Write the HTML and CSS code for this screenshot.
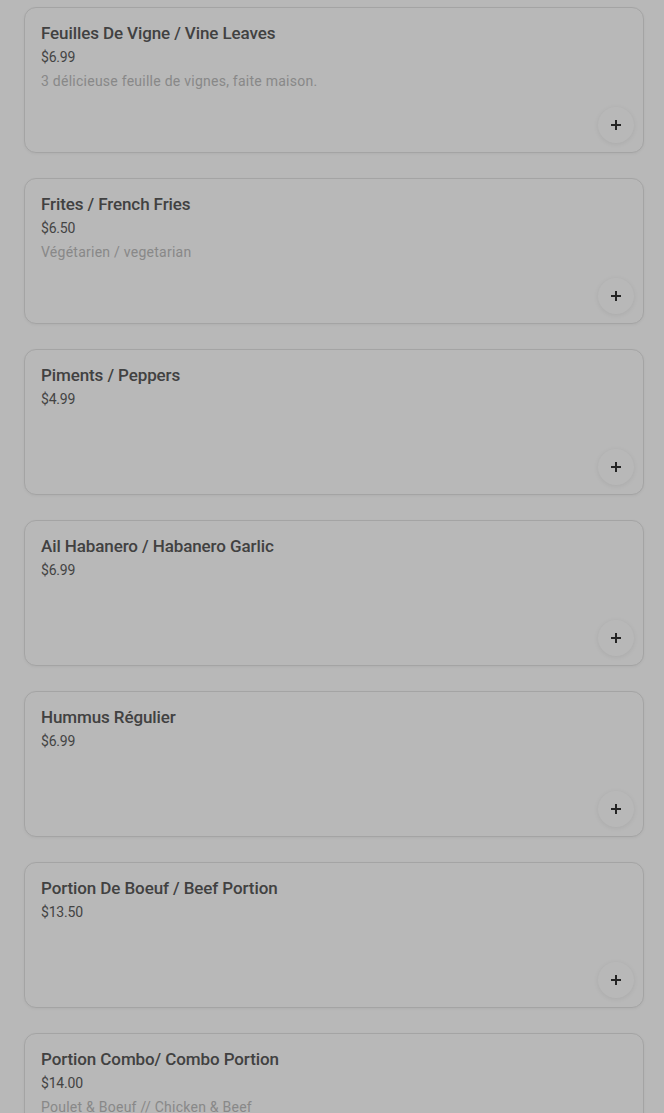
FILE: index.html
```html
<!DOCTYPE html>
<html lang="fr">

<head>
    <meta charset="UTF-8">
    <meta name="viewport" content="width=device-width, initial-scale=1.0">
    <title>Menu</title>
    <link rel="stylesheet" href="styles.css">
</head>

<body>
    <div class="menu-list">
        <div class="item-card">
            <div class="item-info">
                <div class="item-title">Feuilles De Vigne / Vine Leaves</div>
                <div class="item-price">$6.99</div>
                <div class="item-desc">3 délicieuse feuille de vignes, faite maison.</div>
            </div>
            <button class="add-btn" aria-label="Ajouter"><svg viewBox="0 0 12 12" width="12" height="12"><path d="M6 1v10M1 6h10" stroke="#333" stroke-width="2" fill="none"/></svg></button>
        </div>

        <div class="item-card">
            <div class="item-info">
                <div class="item-title">Frites / French Fries</div>
                <div class="item-price">$6.50</div>
                <div class="item-desc">Végétarien  / vegetarian</div>
            </div>
            <button class="add-btn" aria-label="Ajouter"><svg viewBox="0 0 12 12" width="12" height="12"><path d="M6 1v10M1 6h10" stroke="#333" stroke-width="2" fill="none"/></svg></button>
        </div>

        <div class="item-card">
            <div class="item-info">
                <div class="item-title">Piments / Peppers</div>
                <div class="item-price">$4.99</div>
            </div>
            <button class="add-btn" aria-label="Ajouter"><svg viewBox="0 0 12 12" width="12" height="12"><path d="M6 1v10M1 6h10" stroke="#333" stroke-width="2" fill="none"/></svg></button>
        </div>

        <div class="item-card">
            <div class="item-info">
                <div class="item-title">Ail Habanero / Habanero Garlic</div>
                <div class="item-price">$6.99</div>
            </div>
            <button class="add-btn" aria-label="Ajouter"><svg viewBox="0 0 12 12" width="12" height="12"><path d="M6 1v10M1 6h10" stroke="#333" stroke-width="2" fill="none"/></svg></button>
        </div>

        <div class="item-card">
            <div class="item-info">
                <div class="item-title">Hummus Régulier</div>
                <div class="item-price">$6.99</div>
            </div>
            <button class="add-btn" aria-label="Ajouter"><svg viewBox="0 0 12 12" width="12" height="12"><path d="M6 1v10M1 6h10" stroke="#333" stroke-width="2" fill="none"/></svg></button>
        </div>

        <div class="item-card">
            <div class="item-info">
                <div class="item-title">Portion De Boeuf / Beef Portion</div>
                <div class="item-price">$13.50</div>
            </div>
            <button class="add-btn" aria-label="Ajouter"><svg viewBox="0 0 12 12" width="12" height="12"><path d="M6 1v10M1 6h10" stroke="#333" stroke-width="2" fill="none"/></svg></button>
        </div>

        <div class="item-card">
            <div class="item-info">
                <div class="item-title">Portion Combo/ Combo Portion</div>
                <div class="item-price">$14.00</div>
                <div class="item-desc">Poulet &amp; Boeuf // Chicken &amp; Beef</div>
            </div>
            <button class="add-btn" aria-label="Ajouter"><svg viewBox="0 0 12 12" width="12" height="12"><path d="M6 1v10M1 6h10" stroke="#333" stroke-width="2" fill="none"/></svg></button>
        </div>
    </div>

    <!-- fond assombri derrière une fenêtre modale -->
    <div class="backdrop"></div>
</body>

</html>
```

FILE: styles.css
```css
* {
    box-sizing: border-box;
    margin: 0;
    padding: 0;
}

body {
    font-family: Roboto, 'Liberation Sans', Arial, sans-serif;
    background: #fff;
    color: #000;
    overflow: hidden;
}

.menu-list {
    display: flex;
    flex-direction: column;
    gap: 25px;
    padding: 7px 20px 0 24px;
}

.item-card {
    display: flex;
    flex-direction: column;
    justify-content: space-between;
    height: 146px;
    padding: 13px 9px 9px 16px;
    background: #fff;
    border: 1px solid #e4e4e4;
    border-radius: 12px;
    box-shadow: 0 1px 3px rgba(0, 0, 0, 0.05);
}

.item-title {
    font-size: 17px;
    font-weight: 500;
    line-height: 24px;
    color: #5a5a5a;
    letter-spacing: -0.1px;
}

.item-price {
    font-size: 14px;
    line-height: 24px;
    color: #5e5e5e;
    letter-spacing: -0.2px;
}

.item-desc {
    font-size: 14px;
    line-height: 24px;
    color: #bdbdbd;
    letter-spacing: 0.25px;
}

.add-btn {
    align-self: flex-end;
    width: 36px;
    height: 36px;
    border: none;
    border-radius: 50%;
    background: #fff;
    box-shadow: 0 1px 5px rgba(0, 0, 0, 0.08);
    display: flex;
    align-items: center;
    justify-content: center;
    cursor: pointer;
}

.backdrop {
    position: fixed;
    inset: 0;
    background: rgba(0, 0, 0, 0.28);
}
```
